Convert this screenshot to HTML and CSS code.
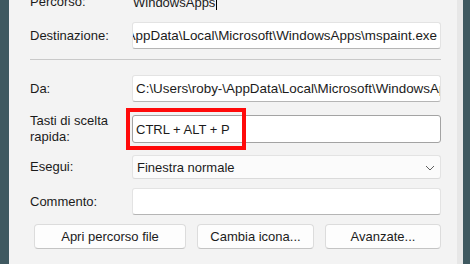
FILE: index.html
```html
<!DOCTYPE html>
<html lang="it">
<head>
    <meta charset="UTF-8">
    <meta name="viewport" content="width=device-width, initial-scale=1.0">
    <title>Proprietà - Paint</title>
    <link rel="stylesheet" href="styles.css">
</head>
<body>
    <div class="dialog">
        <div class="page">

            <div class="row row-path">
                <span class="label">Percorso:</span>
                <span class="value">WindowsApps<span class="caret"></span></span>
            </div>

            <div class="row row-target">
                <span class="label">Destinazione:</span>
                <div class="field field-end">
                    <span>C:\Users\roby-\AppData\Local\Microsoft\WindowsApps\mspaint.exe</span>
                </div>
            </div>

            <div class="separator"></div>

            <div class="row row-from">
                <span class="label">Da:</span>
                <div class="field field-path">
                    <span>C:\Users\roby-\AppData\Local\Microsoft\WindowsApps</span>
                </div>
            </div>

            <!-- campo evidenziato in rosso -->
            <div class="row row-keys">
                <span class="label">Tasti di scelta<br>rapida:</span>
                <div class="field field-keys">
                    <span>CTRL + ALT + P</span>
                    <div class="highlight"></div>
                </div>
            </div>

            <div class="row row-run">
                <span class="label">Esegui:</span>
                <div class="field combo">
                    <span>Finestra normale</span>
                    <svg class="chevron" width="10" height="6" viewBox="0 0 10 6">
                        <path d="M1 1 L5 5 L9 1" fill="none" stroke="#5f5f5f" stroke-width="1"/>
                    </svg>
                </div>
            </div>

            <div class="row row-comment">
                <span class="label">Commento:</span>
                <div class="field"></div>
            </div>

            <div class="buttons">
                <button class="btn btn-open">Apri percorso file</button>
                <button class="btn btn-icon">Cambia icona...</button>
                <button class="btn btn-adv">Avanzate...</button>
            </div>

        </div>
    </div>
</body>
</html>
```

FILE: styles.css
```css
* {
    margin: 0;
    padding: 0;
    box-sizing: border-box;
}

body {
    font-family: 'Liberation Sans', Arial, sans-serif;
    font-size: 13px;
    color: #1b1b1b;
    background: #3f5960;
    width: 470px;
    height: 264px;
    overflow: hidden;
}

.dialog {
    margin-left: 9px;
    width: 454px;
    height: 264px;
    background: #f3f3f3;
    border-right: 6px solid #e7e7e7;
    overflow: hidden;
}

.page {
    padding-left: 21px;
    display: flex;
    flex-direction: column;
}

.row {
    display: flex;
    align-items: center;
}

.label {
    width: 102px;
    flex-shrink: 0;
    line-height: 16px;
}

.row-path {
    height: 26px;
    margin-top: -11px;
}

.value {
    padding-left: 1px;
    display: flex;
    align-items: center;
}

.caret {
    display: inline-block;
    width: 1px;
    height: 15px;
    background: #000;
    margin-left: 1px;
}

.field {
    width: 309px;
    height: 27px;
    background: #fff;
    border: 1px solid #e3e3e3;
    border-bottom: 1px solid #b5b5b5;
    border-radius: 3px;
    display: flex;
    align-items: center;
    padding: 0 3px;
    white-space: nowrap;
    overflow: hidden;
    position: relative;
}

.field-end {
    justify-content: flex-end;
    font-size: 13.4px;
}

.field-path {
    font-size: 13.4px;
}

.row-target {
    margin-top: 7px;
}

.separator {
    width: 411px;
    height: 1px;
    background: #c9c9c9;
    margin-top: 10px;
}

.row-from {
    margin-top: 15px;
}

.row-keys {
    margin-top: 11px;
}

.field-keys {
    height: 28px;
    border: 1px solid #a3a3a3;
    overflow: visible;
}

.highlight {
    position: absolute;
    left: -7px;
    top: -8px;
    width: 120px;
    height: 42px;
    border: 4px solid #ff0a0a;
    pointer-events: none;
}

.row-run {
    margin-top: 10px;
}

.combo {
    height: 24px;
    background: #fbfbfb;
    border-bottom: 1px solid #dadada;
    justify-content: space-between;
    padding: 0 5px 0 4px;
}

.chevron {
    margin-top: 1px;
}

.row-comment {
    margin-top: 9px;
}

.buttons {
    display: flex;
    gap: 11px;
    margin-top: 9px;
    padding-left: 4px;
}

.btn {
    height: 25px;
    font-family: inherit;
    font-size: 13px;
    color: #1b1b1b;
    background: #fdfdfd;
    border: 1px solid #dcdcdc;
    border-bottom: 1px solid #c4c4c4;
    border-radius: 4px;
}

.btn-open {
    width: 152px;
}

.btn-icon {
    width: 117px;
}

.btn-adv {
    width: 116px;
}
```
